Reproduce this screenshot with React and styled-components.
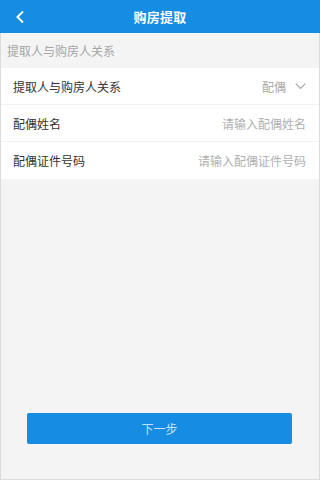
import React from "react";
import styled, { createGlobalStyle } from "styled-components";

const GlobalStyle = createGlobalStyle`
  html, body {
    margin: 0;
    padding: 0;
    height: 100%;
    background: #f4f4f4;
  }
  #root {
    height: 100%;
  }
  * {
    box-sizing: border-box;
  }
`;

const Page = styled.div`
  height: 480px;
  display: flex;
  flex-direction: column;
  background: #f4f4f4;
  border: 1px solid #dcdcdc;
  border-top: none;
  font-family: "Noto Sans CJK SC", "Noto Sans", sans-serif;
`;

const Header = styled.div`
  height: 33px;
  margin: 0 -1px;
  background: #168de3;
  display: flex;
  align-items: center;
  justify-content: center;
  position: relative;
  color: #fff;
`;

const Back = styled.div`
  position: absolute;
  left: 15px;
  top: 10px;
  width: 10px;
  height: 14px;
  display: flex;
`;

const Title = styled.div`
  font-size: 13px;
  font-weight: 700;
  letter-spacing: 0.3px;
`;

const SectionTitle = styled.div`
  height: 35px;
  padding: 0 6px;
  display: flex;
  align-items: center;
  font-size: 12px;
  color: #a5a5a5;
`;

const Group = styled.div`
  background: #fff;
  display: flex;
  flex-direction: column;
`;

const Row = styled.div`
  height: 37px;
  padding: 0 13px 0 12px;
  display: flex;
  align-items: center;
  justify-content: space-between;
  border-bottom: ${(p) => (p.$last ? "none" : "1px solid #f0f0f0")};
`;

const Label = styled.span`
  font-size: 12px;
  color: #333;
`;

const Value = styled.span`
  display: flex;
  align-items: center;
  gap: 9px;
  font-size: 12px;
  color: ${(p) => (p.$hint ? "#b0b0b0" : "#a8a8a8")};
`;

const Spacer = styled.div`
  flex: 1;
`;

const Footer = styled.div`
  padding: 0 27px 35px 26px;
`;

const NextButton = styled.button`
  width: 100%;
  height: 31px;
  border: none;
  border-radius: 2px;
  background: #168de3;
  color: #c9e2f7;
  font-family: inherit;
  font-size: 12px;
  display: flex;
  align-items: center;
  justify-content: center;
`;

export default function App() {
  return (
    <>
      <GlobalStyle />
      <Page>
        <Header>
          <Back>
            <svg width="10" height="14" viewBox="0 0 10 14">
              <path d="M8 1.5 L2.5 7 L8 12.5" stroke="#fff" strokeWidth="2" fill="none" />
            </svg>
          </Back>
          <Title>购房提取</Title>
        </Header>
        <SectionTitle>提取人与购房人关系</SectionTitle>
        <Group>
          <Row>
            <Label>提取人与购房人关系</Label>
            <Value>
              配偶
              <svg width="11" height="7" viewBox="0 0 11 7">
                <path d="M0.7 0.7 L5.5 5.5 L10.3 0.7" stroke="#a8a8a8" strokeWidth="1.2" fill="none" />
              </svg>
            </Value>
          </Row>
          <Row>
            <Label>配偶姓名</Label>
            <Value $hint>请输入配偶姓名</Value>
          </Row>
          <Row $last>
            <Label>配偶证件号码</Label>
            <Value $hint>请输入配偶证件号码</Value>
          </Row>
        </Group>
        <Spacer />
        <Footer>
          <NextButton>下一步</NextButton>
        </Footer>
      </Page>
    </>
  );
}
